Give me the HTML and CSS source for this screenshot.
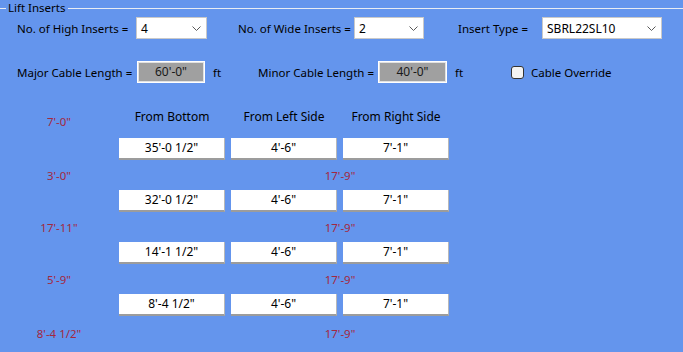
FILE: index.html
```html
<!DOCTYPE html>
<html lang="en">
<head>
    <meta charset="UTF-8">
    <title>Lift Inserts</title>
    <link rel="stylesheet" href="styles.css">
</head>
<body>
    <fieldset class="group">
        <legend>Lift Inserts</legend>

        <div class="row row-top">
            <span class="lbl lbl-high">No. of High Inserts =</span>
            <div class="combo combo-high"><span>4</span>
                <svg class="chev" width="9" height="5" viewBox="0 0 9 5"><polyline points="0.5,0.5 4.5,4.5 8.5,0.5" fill="none" stroke="#5a5a5a" stroke-width="1"/></svg>
            </div>
            <span class="lbl lbl-wide">No. of Wide Inserts =</span>
            <div class="combo combo-wide"><span>2</span>
                <svg class="chev" width="9" height="5" viewBox="0 0 9 5"><polyline points="0.5,0.5 4.5,4.5 8.5,0.5" fill="none" stroke="#5a5a5a" stroke-width="1"/></svg>
            </div>
            <span class="lbl lbl-type">Insert Type =</span>
            <div class="combo combo-type"><span>SBRL22SL10</span>
                <svg class="chev" width="9" height="5" viewBox="0 0 9 5"><polyline points="0.5,0.5 4.5,4.5 8.5,0.5" fill="none" stroke="#5a5a5a" stroke-width="1"/></svg>
            </div>
        </div>

        <div class="row row-cable">
            <span class="lbl lbl-major">Major Cable Length =</span>
            <div class="len-box len-major">60'-0"</div>
            <span class="unit unit-major">ft</span>
            <span class="lbl lbl-minor">Minor Cable Length =</span>
            <div class="len-box len-minor">40'-0"</div>
            <span class="unit unit-minor">ft</span>
            <span class="check"></span>
            <span class="lbl">Cable Override</span>
        </div>

        <div class="grid">
            <div class="red hdr-cell">7'-0"</div>
            <div class="hdr">From Bottom</div>
            <div class="hdr">From Left Side</div>
            <div class="hdr">From Right Side</div>

            <div class="cell c1">35'-0 1/2"</div>
            <div class="cell">4'-6"</div>
            <div class="cell">7'-1"</div>
            <div class="red">3'-0"</div>
            <div class="red span">17'-9"</div>

            <div class="cell c1">32'-0 1/2"</div>
            <div class="cell">4'-6"</div>
            <div class="cell">7'-1"</div>
            <div class="red">17'-11"</div>
            <div class="red span">17'-9"</div>

            <div class="cell c1">14'-1 1/2"</div>
            <div class="cell">4'-6"</div>
            <div class="cell">7'-1"</div>
            <div class="red">5'-9"</div>
            <div class="red span">17'-9"</div>

            <div class="cell c1">8'-4 1/2"</div>
            <div class="cell">4'-6"</div>
            <div class="cell">7'-1"</div>
            <div class="red last">8'-4 1/2"</div>
            <div class="red span last">17'-9"</div>
        </div>
    </fieldset>
</body>
</html>
```

FILE: styles.css
```css
html, body {
    margin: 0;
    padding: 0;
}

body {
    width: 683px;
    height: 352px;
    overflow: hidden;
    background-color: #6495ed;
    font-family: "Noto Sans", "Open Sans", sans-serif;
    font-size: 11.5px;
    color: #000;
}

.group {
    margin: 0;
    padding: 0;
    border: 0;
    border-top: 1px solid #e8ecf4;
    min-width: 0;
}

.group legend {
    margin-left: 6px;
    padding: 0 2px;
    line-height: 16px;
    font-size: 11.5px;
}

.row {
    display: flex;
    align-items: center;
    height: 22px;
    padding-left: 17px;
}

.row-top {
    margin-top: 1px;
}

.row-cable {
    margin-top: 22px;
}

.lbl {
    white-space: nowrap;
}

.lbl-high { width: 119px; }
.lbl-wide { width: 116px; margin-left: 31px; }
.lbl-type { width: 84px; margin-left: 34px; }

.combo {
    box-sizing: border-box;
    height: 22px;
    display: flex;
    align-items: center;
    justify-content: space-between;
    background: #fff;
    border: 1px solid #c9c9c9;
    padding: 0 5px 0 4px;
    font-size: 12px;
}

.combo .chev {
    margin-top: 1px;
}

.combo-high { width: 71px; }
.combo-wide { width: 70px; }
.combo-type { width: 120px; }

.lbl-major { width: 120px; }
.lbl-minor { width: 120px; }

.len-box {
    box-sizing: border-box;
    height: 22px;
    line-height: 20px;
    text-align: center;
    background: #a0a0a0;
    border: 1px solid #fff;
    box-shadow: inset 0 0 0 1px #e2e2e2;
    color: #1a1a1a;
    font-size: 12px;
}

.len-major { width: 68px; }
.len-minor { width: 69px; }

.unit {
    padding-left: 8px;
}

.unit-major { width: 45px; }
.unit-minor { width: 56px; }

.check {
    box-sizing: border-box;
    width: 13px;
    height: 13px;
    margin-right: 7px;
    background: #f3f3f3;
    border: 1px solid #333;
    border-radius: 3px;
}

.grid {
    display: grid;
    grid-template-columns: 113px 106px 106px 106px;
    grid-template-rows: 32px repeat(4, 22px 30px);
    column-gap: 6px;
    margin-top: 23px;
}

.hdr, .hdr-cell {
    align-self: start;
    line-height: 22px;
    text-align: center;
}

.hdr {
    font-size: 12px;
}

.red {
    color: #a3283f;
    text-align: center;
    align-self: center;
    padding-left: 5px;
}

.red.span {
    grid-column: 3 / 5;
    padding-left: 0;
}

.red.last {
    padding-top: 4px;
}

.cell {
    box-sizing: border-box;
    height: 22px;
    line-height: 20px;
    text-align: center;
    background: #fff;
    border-right: 1px solid #b8b8b8;
    border-bottom: 2px solid #9c9c9c;
    font-size: 12px;
}

.cell.c1 {
    grid-column: 2;
}
```
